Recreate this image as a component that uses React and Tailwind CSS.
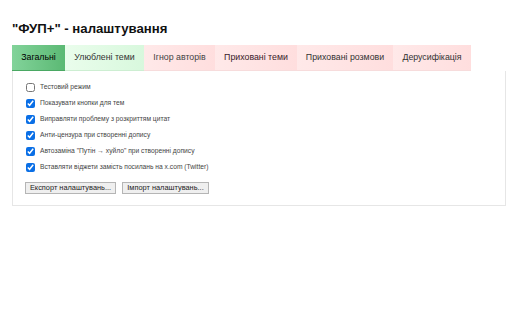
import React from "react";

const tabs = [
  { label: "Загальні", w: "w-[53px]", cls: "bg-gradient-to-r from-[#82d39a] to-[#5bb974] border-b border-[#4aa863]", txt: "text-black" },
  { label: "Улюблені теми", w: "w-[79px]", cls: "bg-gradient-to-r from-[#eafdec] to-[#d8f8dd] border-b border-[#cdeed2]", txt: "text-[#333]" },
  { label: "Ігнор авторів", w: "w-[71px]", cls: "bg-gradient-to-r from-[#ffe9e9] to-[#ffdede] border-b border-[#f7dcdc]", txt: "text-[#444]" },
  { label: "Приховані теми", w: "w-[82px]", cls: "bg-gradient-to-r from-[#ffe9e9] to-[#ffdede] border-b border-[#f7dcdc]", txt: "text-[#3a1a2a]" },
  { label: "Приховані розмови", w: "w-[96px]", cls: "bg-gradient-to-r from-[#ffe9e9] to-[#ffdede] border-b border-[#f7dcdc]", txt: "text-[#333]" },
  { label: "Дерусифікація", w: "w-[78px]", cls: "bg-gradient-to-r from-[#ffe9e9] to-[#ffdede] border-b border-[#f7dcdc]", txt: "text-[#333]" },
];

const options = [
  { label: "Тестовий режим", checked: false },
  { label: "Показувати кнопки для тем", checked: true },
  { label: "Виправляти проблему з розкриттям цитат", checked: true },
  { label: "Анти-цензура при створенні допису", checked: true },
  { label: "Автозаміна \"Путін → хуйло\" при створенні допису", checked: true },
  { label: "Вставляти віджети замість посилань на x.com (Twitter)", checked: true },
];

export default function App() {
  return (
    <div className="w-[512px] h-[320px] bg-white px-[12px] pt-[21px] font-['Liberation_Sans',Arial,sans-serif]">
      <h1 className="text-[13.2px] font-bold leading-[15px] text-[#111] mb-[9px]">"ФУП+" - налаштування</h1>

      {/* tabs */}
      <div className="flex h-[26px]">
        {tabs.map((t) => (
          <div key={t.label} className={`${t.w} ${t.cls} flex items-center justify-center`}>
            <span className={`${t.txt} text-[8.8px]`}>{t.label}</span>
          </div>
        ))}
      </div>

      {/* panel */}
      <div className="w-[494px] h-[135px] border border-t-0 border-[#e6e6e6] pl-[13px] pt-[11px]">
        <div className="flex flex-col gap-[6px]">
          {options.map((o) => (
            <label key={o.label} className="flex items-center gap-[5px] h-[10px] text-[6.7px] text-[#444]">
              <input type="checkbox" defaultChecked={o.checked} className="w-[9px] h-[9px] m-0 accent-[#0a6fe6]" />
              {o.label}
            </label>
          ))}
        </div>
        <div className="flex gap-[6px] mt-[10px] -ml-px">
          <button className="w-[91px] h-[12px] bg-[#efefef] border border-[#b5b5b5] text-[7.4px] leading-[10px] text-[#222]">
            Експорт налаштувань...
          </button>
          <button className="w-[87px] h-[12px] bg-[#efefef] border border-[#b5b5b5] text-[7.4px] leading-[10px] text-[#222]">
            Імпорт налаштувань...
          </button>
        </div>
      </div>
    </div>
  );
}
